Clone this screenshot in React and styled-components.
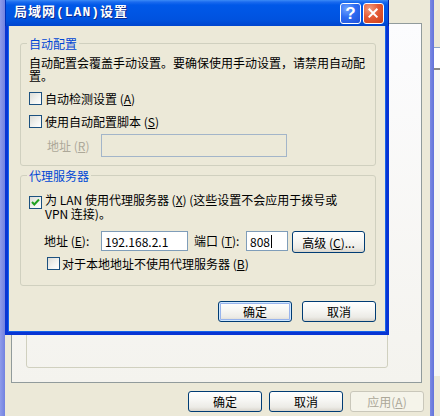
import React from 'react';
import styled, { createGlobalStyle } from 'styled-components';

const GlobalStyle = createGlobalStyle`
  html, body { margin: 0; padding: 0; }
  body {
    width: 440px; height: 416px; overflow: hidden;
    background: #ECE9D8;
    font-family: "Noto Sans CJK SC", "Liberation Sans", sans-serif;
    font-size: 12px; color: #000;
  }
  #root { width: 440px; height: 416px; position: relative; }
  * { box-sizing: border-box; }
`;

const Screen = styled.div`
  display: flex; width: 440px; height: 416px; position: relative;
`;

const LeftEdge = styled.div`
  width: 5px;
  background: linear-gradient(to right, #8E9BE9, #7282E0);
`;

/* the "Internet 选项" window behind the dialog */
const ParentWindow = styled.div`
  flex: 0 0 425px;
  display: flex; flex-direction: column;
  padding: 23px 6px 0 6px;
  background: #ECE9D8;
`;

const Panel = styled.div`
  height: 360px; margin-right: 2px;
  border: 1px solid #919B9C;
  background: linear-gradient(#FCFCFE, #F4F3EE);
  display: flex; flex-direction: column; justify-content: flex-end;
`;

const InnerGroup = styled.div`
  height: 120px;
  margin: 0 33px 14px 14px;
  border: 1px solid #D0D0BF;
  border-radius: 3px;
`;

const ButtonRow = styled.div`
  display: flex; justify-content: flex-end; gap: ${p => p.$gap}px;
  margin-top: ${p => p.$top}px;
`;

const RightBar = styled.div`
  width: 4px;
  background: linear-gradient(to right, #7B8AE4, #6373DA);
`;

const Behind = styled.div`
  flex: 1; display: flex; flex-direction: column;
`;

const BehindTop = styled.div`
  height: 48px; background: #ECE9D8; border-bottom: 1px solid #8FA6C8;
`;

const BehindStrip = styled.div`
  height: 22px; background: #fff; border-bottom: 2px solid #8A8A86;
`;

const BehindBody = styled.div`
  height: 306px; background: #F7F7F4;
`;

const Dialog = styled.div`
  position: absolute; left: 5px; top: 0;
  width: 384px; height: 335px;
  display: flex; flex-direction: column;
`;

const TitleBar = styled.div`
  height: 26px;
  display: flex; align-items: center; gap: 2px;
  padding: 0 4px 0 8px;
  background: linear-gradient(to bottom, #3C8BF6 0px, #1B6BEF 2px, #0058E8 5px,
    #0055E3 14px, #0052DE 20px, #0045CE 26px);
  border-left: 1px solid #0030B8;
  border-right: 1px solid #0020A8;
`;

const Title = styled.div`
  flex: 1;
  font-family: "Liberation Mono", "Noto Sans CJK SC", monospace;
  font-size: 13px; font-weight: bold; line-height: 14px;
  letter-spacing: 1px;
  color: #fff;
  text-shadow: 1px 1px 0 #0A2A8C;
  white-space: nowrap;
`;

const CaptionButton = styled.div`
  width: 21px; height: 21px;
  border: 1px solid #fff; border-radius: 3px;
  display: flex; align-items: center; justify-content: center;
  background: ${p => p.$close
    ? 'radial-gradient(circle at 30% 25%, #F29C7E 0%, #E45A35 45%, #CB3F18 100%)'
    : 'radial-gradient(circle at 30% 25%, #6FA3FF 0%, #2D6CF2 45%, #1F50D8 100%)'};
  color: #fff;
  font-family: "Liberation Sans", sans-serif;
  font-size: 17px; font-weight: bold; line-height: 1;
`;

const DialogBody = styled.div`
  flex: 1;
  background: #ECE9D8;
  border: 3px solid #0835D4;
  border-top: 0;
  box-shadow: inset 1px 0 0 #1663EA, inset -1px 0 0 #1663EA, inset 0 -1px 0 #1663EA;
  padding: 0 10px 0 12px;
  display: flex; flex-direction: column;
`;

const Group = styled.fieldset`
  margin: ${p => p.$top}px 0 0 0;
  padding: 0 8px ${p => p.$bottom}px 8px;
  border: 1px solid #D0D0BF;
  border-radius: 3px;
  min-width: 0;
`;

const Legend = styled.legend`
  color: #0046D5;
  font-size: 12px; line-height: 13px;
  padding: 0 2px; margin-left: -2px;
`;

const Desc = styled.div`
  margin-top: 6px;
  line-height: 13px;
  white-space: nowrap;
`;

const CheckRow = styled.div`
  display: flex; align-items: ${p => (p.$multi ? 'flex-start' : 'center')};
  gap: ${p => p.$gap ?? 3}px;
  margin-top: ${p => p.$top}px;
  margin-left: ${p => p.$indent ?? 0}px;
  line-height: ${p => (p.$multi ? 14 : 13)}px;
  white-space: nowrap;
`;

const Box = styled.span`
  flex: 0 0 13px; width: 13px; height: 13px;
  margin-top: ${p => p.$top ?? 0}px;
  border: 1px solid #1C5180;
  background: linear-gradient(135deg, #DCDCD7 0%, #F4F4F1 60%, #FFFFFF 100%);
  display: flex; align-items: center; justify-content: center;
`;

const FieldRow = styled.div`
  display: flex; align-items: ${p => p.$align ?? 'center'};
  margin-top: ${p => p.$top}px;
  margin-left: ${p => p.$indent}px;
`;

const FieldLabel = styled.span`
  width: ${p => p.$w}px;
  margin-left: ${p => p.$left ?? 0}px;
  margin-top: ${p => p.$dy ?? 0}px;
  line-height: 13px;
  white-space: nowrap;
  color: ${p => (p.$disabled ? '#ACA899' : '#000')};
`;

const TextBox = styled.div`
  width: ${p => p.$w}px; height: ${p => p.$h}px;
  border: 1px solid ${p => (p.$disabled ? '#A3B5C9' : '#7F9DB9')};
  background: ${p => (p.$disabled ? '#ECE9D8' : '#fff')};
  display: flex; align-items: center;
  padding-left: 3px;
  font-size: 12px; line-height: 13px;
  white-space: nowrap;
`;

const Caret = styled.span`
  display: inline-block; width: 1px; height: 13px; background: #000;
  margin-left: 1px;
`;

const Button = styled.div`
  width: ${p => p.$w ?? 74}px; height: ${p => p.$h ?? 21}px;
  margin-left: ${p => p.$left ?? 0}px;
  border: 1px solid ${p => (p.$disabled ? '#C9C7BA' : '#003C74')};
  border-radius: 3px;
  background: ${p => (p.$disabled
    ? '#F5F4EA'
    : 'linear-gradient(#FFFFFF 0%, #F6F6F3 45%, #ECEBE6 80%, #D8D4CB 100%)')};
  box-shadow: ${p => (p.$default
    ? 'inset 0 0 0 1px #CEE7FF, inset 0 0 0 2px #98B4EC'
    : 'none')};
  color: ${p => (p.$disabled ? '#ACA899' : '#000')};
  display: flex; align-items: center; justify-content: center;
  font-size: 12px; line-height: 13px;
  white-space: nowrap;
`;

const Check = () => (
  <svg width="9" height="9" viewBox="0 0 9 9">
    <polyline points="1,4 3.3,6.5 8,1.5" fill="none" stroke="#21A121" strokeWidth="2" />
  </svg>
);

const CloseX = () => (
  <svg width="21" height="21" viewBox="0 0 21 21">
    <path d="M6 6 L14 14 M14 6 L6 14" stroke="#fff" strokeWidth="2.2" strokeLinecap="square" />
  </svg>
);

const Checkbox = ({ checked, top }) => (
  <Box $top={top}>{checked && <Check />}</Box>
);

export default function App() {
  return (
    <>
      <GlobalStyle />
      <Screen>
        <LeftEdge />
        <ParentWindow>
          <Panel>
            <InnerGroup />
          </Panel>
          <ButtonRow $gap={7} $top={8}>
            <Button>确定</Button>
            <Button>取消</Button>
            <Button $disabled>应用(<u>A</u>)</Button>
          </ButtonRow>
        </ParentWindow>
        <RightBar />
        <Behind>
          <BehindTop />
          <BehindStrip />
          <BehindBody />
        </Behind>

        <Dialog>
          <TitleBar>
            <Title>局域网(LAN)设置</Title>
            <CaptionButton>?</CaptionButton>
            <CaptionButton $close><CloseX /></CaptionButton>
          </TitleBar>
          <DialogBody>
            <Group $top={11} $bottom={8}>
              <Legend>自动配置</Legend>
              <Desc>
                自动配置会覆盖手动设置。要确保使用手动设置，请禁用自动配<br />置。
              </Desc>
              <CheckRow $top={10}>
                <Checkbox />
                <span>自动检测设置 (<u>A</u>)</span>
              </CheckRow>
              <CheckRow $top={10}>
                <Checkbox />
                <span>使用自动配置脚本 (<u>S</u>)</span>
              </CheckRow>
              <FieldRow $top={6} $indent={18}>
                <FieldLabel $w={54} $disabled>地址 (<u>R</u>)</FieldLabel>
                <TextBox $w={186} $h={23} $disabled />
              </FieldRow>
            </Group>

            <Group $top={3} $bottom={15}>
              <Legend>代理服务器</Legend>
              <CheckRow $top={11} $multi>
                <Checkbox checked top={3} />
                <span>
                  为 LAN 使用代理服务器 (<u>X</u>) (这些设置不会应用于拨号或<br />VPN 连接)。
                </span>
              </CheckRow>
              <FieldRow $top={10} $indent={15} $align="flex-start">
                <FieldLabel $w={57} $dy={3}>地址 (<u>E</u>):</FieldLabel>
                <TextBox $w={87} $h={20}>192.168.2.1</TextBox>
                <FieldLabel $w={52} $left={6} $dy={3}>端口 (<u>T</u>):</FieldLabel>
                <TextBox $w={42} $h={20}>808<Caret /></TextBox>
                <Button $w={73} $h={22} $left={4}>高级 (<u>C</u>)...</Button>
              </FieldRow>
              <CheckRow $top={4} $indent={18} $gap={2}>
                <Checkbox />
                <span>对于本地地址不使用代理服务器 (<u>B</u>)</span>
              </CheckRow>
            </Group>

            <ButtonRow $gap={10} $top={15}>
              <Button $default>确定</Button>
              <Button>取消</Button>
            </ButtonRow>
          </DialogBody>
        </Dialog>
      </Screen>
    </>
  );
}
